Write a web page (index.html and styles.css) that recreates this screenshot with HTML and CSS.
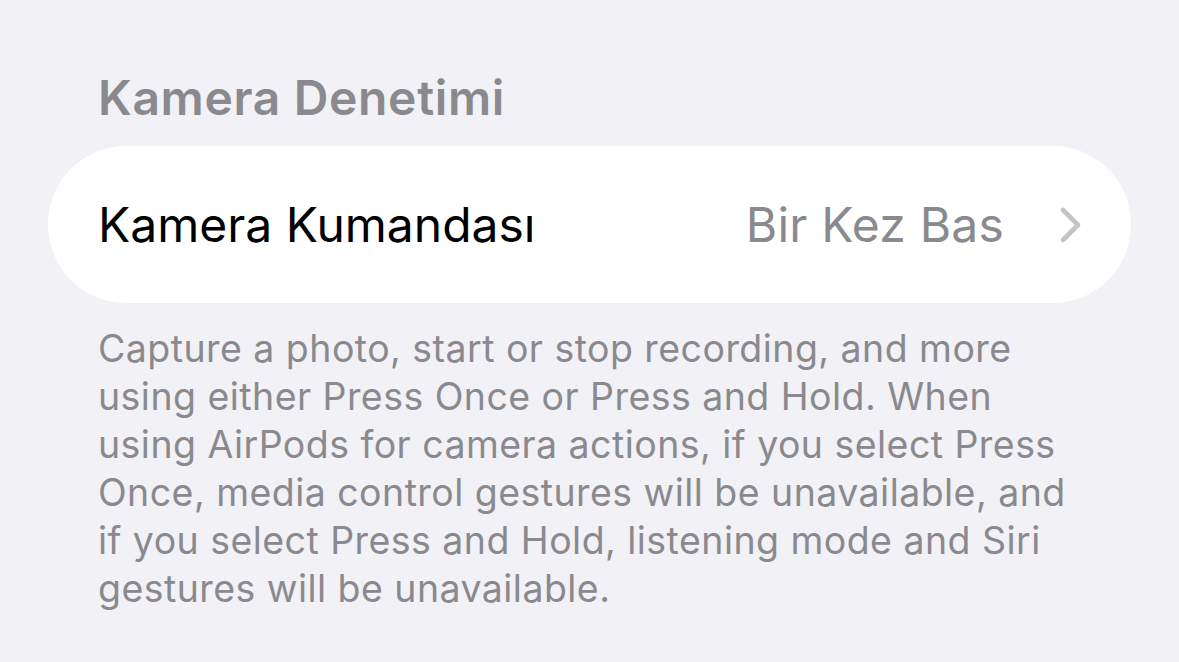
FILE: index.html
```html
<!DOCTYPE html>
<html lang="tr">
<head>
<meta charset="utf-8">
<link rel="stylesheet" href="styles.css">
</head>
<body>
<main class="page">
  <h2 class="section-title">Kamera Denetimi</h2>
  <div class="card">
    <div class="row">
      <span class="row-label">Kamera Kumandası</span>
      <span class="row-value">Bir Kez Bas</span>
      <svg class="chevron" width="24" height="38" viewBox="0 0 24 38" aria-hidden="true">
        <path d="M4 4 L19 19 L4 34" fill="none" stroke="#c4c4c7" stroke-width="4.6" stroke-linecap="round" stroke-linejoin="round"/>
      </svg>
    </div>
  </div>
  <p class="footer">Capture a photo, start or stop recording, and more<br>using either Press Once or Press and Hold. When<br>using AirPods for camera actions, if you select Press<br>Once, media control gestures will be unavailable, and<br>if you select Press and Hold, listening mode and Siri<br>gestures will be unavailable.</p>
</main>
</body>
</html>
```

FILE: styles.css
```css
html, body {
  margin: 0;
  padding: 0;
  background: #f2f1f6;
  font-family: "Inter", "Noto Sans", sans-serif;
}

.page {
  padding: 66px 48px 0 48px;
  display: flex;
  flex-direction: column;
}

.section-title {
  margin: 0 0 0 50px;
  font-size: 48px;
  line-height: 64px;
  font-weight: 600;
  color: #8a8a8e;
  letter-spacing: 0.65px;
}

.card {
  margin-top: 16px;
  background: #ffffff;
  border-radius: 78px;
  height: 157px;
  display: flex;
  align-items: center;
}

.row {
  flex: 1;
  display: flex;
  align-items: center;
  padding: 0 48px 0 50px;
}

.row-label {
  font-size: 48px;
  color: #000000;
  flex: 1;
  letter-spacing: 0px;
}

.row-value {
  font-size: 48px;
  color: #8a8a8e;
  margin-right: 55px;
  letter-spacing: 0.2px;
}

.chevron {
  display: block;
}

.footer {
  margin: 22px 0 0 50px;
  font-size: 37.5px;
  line-height: 48px;
  color: #8a8a8e;
  letter-spacing: 0.45px;
}
```
